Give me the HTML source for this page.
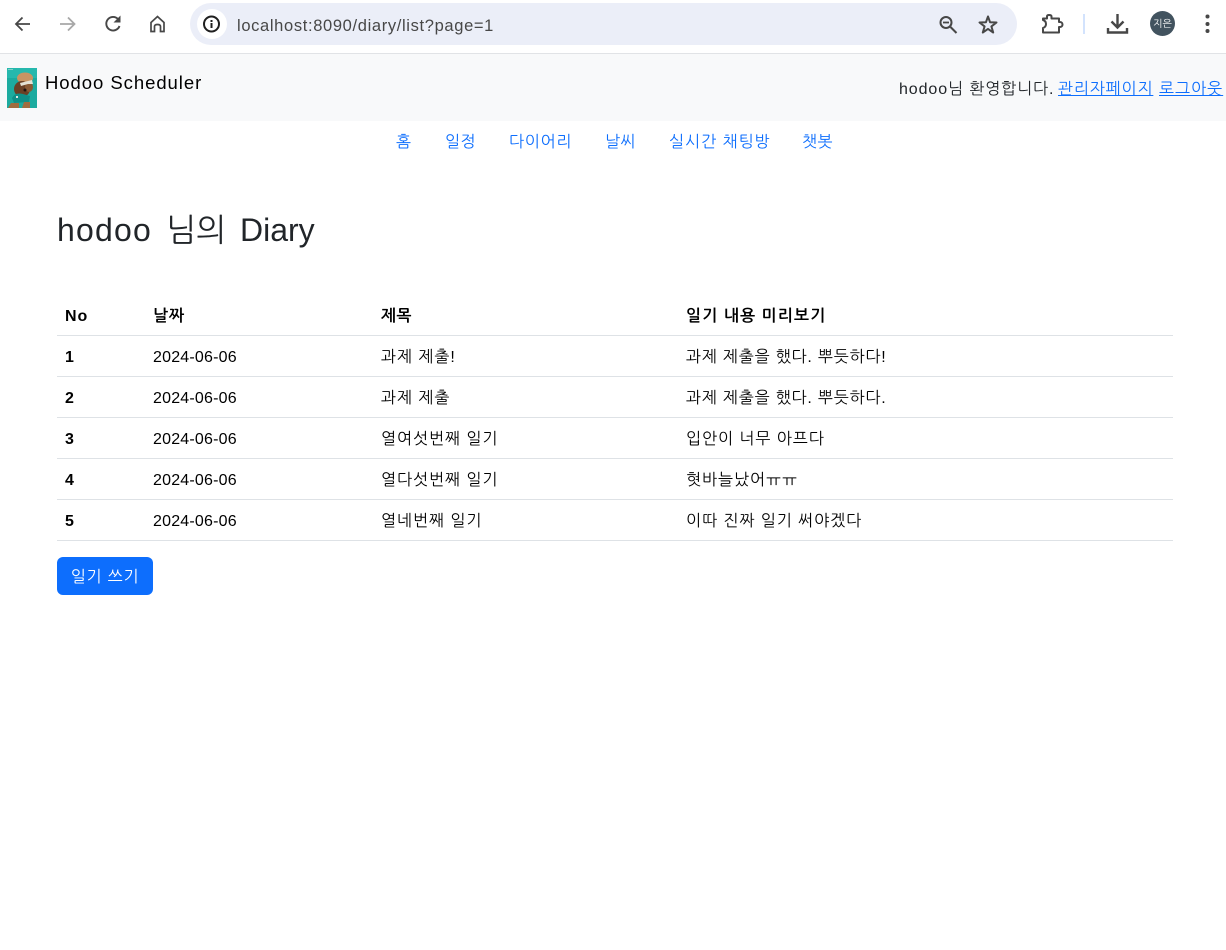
<!DOCTYPE html>
<html lang="ko"><head><meta charset="utf-8"><title>Hodoo Diary</title>
<style>
html,body{margin:0;padding:0;background:#fff;width:1226px;height:950px;overflow:hidden}
body{font-family:"Liberation Sans","NanumGothic","Noto Sans CJK KR",sans-serif;font-size:16px;color:#212529;position:relative}
.t{position:absolute;white-space:nowrap;line-height:24px;letter-spacing:.95px}
.d{letter-spacing:.2px}
a{color:#0d6efd}
.n{color:#0d6efd;top:131px}
.line{position:absolute;left:57px;width:1116px;height:1px;background:#dee2e6}
.b{font-weight:bold;color:#000}
.c{color:#000}
svg{position:absolute}
</style></head><body>
<div style="position:absolute;left:0;top:53px;width:1226px;height:1px;background:#e1e3e6"></div>
<svg style="left:0;top:0" width="180" height="53" viewBox="0 0 180 53" fill="none">
<path d="M30 24H16.500M22.500 17.500L16 24L22.500 30.500" stroke="#474747" stroke-width="1.800"/>
<path d="M60 24H74M68 17.500L74.500 24L68 30.500" stroke="#a8a8a8" stroke-width="1.800"/>
<path d="M118 19A6.800 6.800 0 1 0 119.500 26" stroke="#474747" stroke-width="1.900"/><path d="M113.500 22.500H120.500V15.500Z" fill="#474747"/>
<path d="M151 31.500V22.500L157.500 16.500L164 22.500V31.500H160.500V26.500Q160.500 24.500 157.500 24.500Q154.500 24.500 154.500 26.500V31.500Z" stroke="#474747" stroke-width="1.700"/>
</svg>
<div style="position:absolute;left:190px;top:3px;width:827px;height:42px;border-radius:21px;background:#ebeef8"></div>
<div style="position:absolute;left:197px;top:9px;width:30px;height:30px;border-radius:15px;background:#fff"></div>
<svg style="left:202px;top:14px" width="20" height="20" viewBox="0 0 20 20" fill="none"><circle cx="9.500" cy="10" r="7.500" stroke="#1f1f1f" stroke-width="2"/><rect x="8.500" y="9" width="2" height="5" fill="#1f1f1f"/><rect x="8.500" y="6" width="2" height="2" fill="#1f1f1f"/></svg>
<div class="t" style="left:237px;top:14px;color:#474747;font-size:16.500px;letter-spacing:.65px">localhost:8090/diary/list?page=1</div>
<svg style="left:930px;top:0" width="296" height="53" viewBox="930 0 296 53" fill="none">
<circle cx="946" cy="22.500" r="5.500" stroke="#474747" stroke-width="2"/><path d="M943 22.500H949" stroke="#474747" stroke-width="1.800"/><path d="M950.500 27L956.500 33" stroke="#474747" stroke-width="2"/>
<path d="M988 16.500L990.100 22.300L996.500 22.500L991.400 26.400L993.200 32.500L988 28.900L982.800 32.500L984.600 26.400L979.500 22.500L985.900 22.300Z" stroke="#474747" stroke-width="2" stroke-linejoin="round"/>
<path d="M1043 18.500H1047V16.500Q1047 15 1049 15Q1051.500 15 1051.500 16.500V18.500H1059V22H1060A2.300 2.300 0 0 1 1060 27H1059V32.500H1043V28Q1046 27 1046 24Q1046 21 1043 20Z" stroke="#474747" stroke-width="2" stroke-linejoin="round"/>
<rect x="1083" y="14" width="2" height="20" fill="#d3e3fd"/>
<path d="M1117.500 14V27M1111.500 21.500L1117.500 27.500L1123.500 21.500" stroke="#474747" stroke-width="2.400"/><path d="M1108 28V32.500H1127V28" stroke="#474747" stroke-width="2.400"/>
<circle cx="1162.500" cy="23.500" r="12.500" fill="#42535f"/>
<circle cx="1207.500" cy="16.500" r="2" fill="#474747"/><circle cx="1207.500" cy="24" r="2" fill="#474747"/><circle cx="1207.500" cy="31" r="2" fill="#474747"/>
</svg>
<div class="t" style="left:1152px;top:12px;color:#fff;font-size:10px;width:21px;text-align:center;letter-spacing:0;line-height:26px">지은</div>

<div style="position:absolute;left:0;top:54px;width:1226px;height:67px;background:#f8f9fa"></div>
<svg style="left:7px;top:68px" width="30" height="40" viewBox="0 0 30 40">
<rect width="30" height="40" fill="#1cab9f"/><rect width="30" height="10" fill="#26b8ad"/>
<rect x="1" y="1" width="5" height="1" fill="#7fd0c8"/>
<ellipse cx="18" cy="10" rx="8" ry="5.500" fill="#c79463"/>
<ellipse cx="15" cy="21" rx="8" ry="8" fill="#6a4025"/>
<ellipse cx="22" cy="19" rx="4" ry="5" fill="#8a5a35"/>
<path d="M13 15L25 12L26 16L21 16L14 18Z" fill="#e4e1d4"/>
<circle cx="18" cy="22" r="1.500" fill="#1e1410"/>
<path d="M5 30Q8 24 16 26L23 28L22 34L7 35Z" fill="#0f9088"/>
<rect x="9" y="28" width="2" height="2" fill="#dfe8e2"/>
<path d="M1 40L4 35L12 35L12 40ZM15 40L17 34L23 34L23 40Z" fill="#a06d40"/>
</svg>
<div class="t" style="left:45px;top:71px;font-size:18.500px;color:#000">Hodoo Scheduler</div>
<div class="t" style="left:899px;top:78px;font-size:16px;letter-spacing:.9px">hodoo님 환영합니다.</div>
<a class="t" href="#" style="left:1058px;top:78px;letter-spacing:.85px">관리자페이지</a>
<a class="t" href="#" style="left:1159px;top:78px;letter-spacing:1px">로그아웃</a>

<div class="t n" style="left:396px">홈</div>
<div class="t n" style="left:445px;letter-spacing:.5px">일정</div>
<div class="t n" style="left:509px;letter-spacing:.75px">다이어리</div>
<div class="t n" style="left:605px;letter-spacing:.5px">날씨</div>
<div class="t n" style="left:669px;letter-spacing:1px">실시간 채팅방</div>
<div class="t n" style="left:802px;letter-spacing:.5px">챗봇</div>

<div class="t" style="left:57px;top:208px;font-size:32px;line-height:44px;letter-spacing:1.2px">hodoo</div>
<div class="t" style="left:166px;top:208px;font-size:32px;line-height:44px;letter-spacing:0">님의</div>
<div class="t" style="left:240px;top:208px;font-size:32px;line-height:44px;letter-spacing:0">Diary</div>

<div class="t b" style="left:65px;top:305px">No</div><div class="t b" style="left:153px;top:305px">날짜</div><div class="t b" style="left:381px;top:305px;letter-spacing:.5px">제목</div><div class="t b" style="left:686px;top:305px;letter-spacing:1.1px">일기 내용 미리보기</div>
<div class="line" style="top:335px"></div>
<div class="t b" style="left:65px;top:346px">1</div><div class="t c d" style="left:153px;top:346px">2024-06-06</div><div class="t c" style="left:381px;top:346px">과제 제출!</div><div class="t c" style="left:686px;top:346px;letter-spacing:.8px">과제 제출을 했다. 뿌듯하다!</div>
<div class="line" style="top:376px"></div>
<div class="t b" style="left:65px;top:387px">2</div><div class="t c d" style="left:153px;top:387px">2024-06-06</div><div class="t c" style="left:381px;top:387px">과제 제출</div><div class="t c" style="left:686px;top:387px;letter-spacing:.8px">과제 제출을 했다. 뿌듯하다.</div>
<div class="line" style="top:417px"></div>
<div class="t b" style="left:65px;top:428px">3</div><div class="t c d" style="left:153px;top:428px">2024-06-06</div><div class="t c" style="left:381px;top:428px">열여섯번째 일기</div><div class="t c" style="left:686px;top:428px">입안이 너무 아프다</div>
<div class="line" style="top:458px"></div>
<div class="t b" style="left:65px;top:469px">4</div><div class="t c d" style="left:153px;top:469px">2024-06-06</div><div class="t c" style="left:381px;top:469px">열다섯번째 일기</div><div class="t c" style="left:686px;top:469px">혓바늘났어ㅠㅠ</div>
<div class="line" style="top:499px"></div>
<div class="t b" style="left:65px;top:510px">5</div><div class="t c d" style="left:153px;top:510px">2024-06-06</div><div class="t c" style="left:381px;top:510px">열네번째 일기</div><div class="t c" style="left:686px;top:510px">이따 진짜 일기 써야겠다</div>
<div class="line" style="top:540px"></div>
<div style="position:absolute;left:57px;top:557px;width:96px;height:38px;border-radius:6px;background:#0d6efd;color:#fff;text-align:center;line-height:42px;white-space:nowrap;letter-spacing:.8px">일기 쓰기</div>
</body></html>
